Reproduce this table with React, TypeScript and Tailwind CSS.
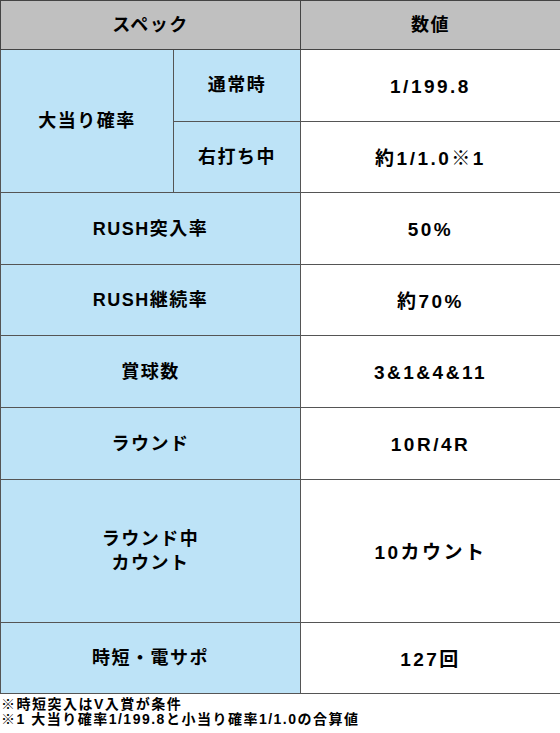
export default function App() {
  const label = "bg-[#bde3f7] border border-[#555] text-center align-middle tracking-[1.5px]";
  const value = "bg-white border border-[#555] text-center align-middle text-[19px] tracking-[2.5px] pt-[4px]";
  const rows: { name: React.ReactNode; val: string; h: string }[] = [
    { name: "RUSH突入率", val: "50%", h: "h-[72px]" },
    { name: "RUSH継続率", val: "約70%", h: "h-[71px]" },
    { name: "賞球数", val: "3&1&4&11", h: "h-[72px]" },
    { name: "ラウンド", val: "10R/4R", h: "h-[72px]" },
    {
      name: (
        <>
          ラウンド中
          <br />
          カウント
        </>
      ),
      val: "10カウント",
      h: "h-[143px]",
    },
    { name: "時短・電サポ", val: "127回", h: "h-[71px]" },
  ];

  return (
    <div className="w-[560px] h-[733px] bg-white font-['Liberation_Sans','Noto_Sans_CJK_JP',sans-serif] font-bold text-[18px] text-black">
      <table className="w-[560px] border-collapse table-fixed border border-[#222]">
        <colgroup>
          <col className="w-[173px]" />
          <col className="w-[127px]" />
          <col className="w-[260px]" />
        </colgroup>
        <tbody>
          <tr className="h-[49px]">
            <td colSpan={2} className="bg-[#c0c0c0] border border-[#444] text-center align-middle tracking-[1.5px]">
              スペック
            </td>
            <td className="bg-[#c0c0c0] border border-[#444] text-center align-middle tracking-[1.5px]">数値</td>
          </tr>
          <tr className="h-[72px]">
            <td rowSpan={2} className={label}>
              大当り確率
            </td>
            <td className={label}>通常時</td>
            <td className={value}>1/199.8</td>
          </tr>
          <tr className="h-[71px]">
            <td className={label}>右打ち中</td>
            <td className={value}>約1/1.0※1</td>
          </tr>
          {rows.map((r, i) => (
            <tr key={i} className={r.h}>
              <td colSpan={2} className={`${label} leading-[24px]`}>
                {r.name}
              </td>
              <td className={value}>{r.val}</td>
            </tr>
          ))}
        </tbody>
      </table>
      <div className="text-[14px] leading-[15px] pt-[3px] tracking-[1.5px] pl-[1px]">
        <p>※時短突入はV入賞が条件</p>
        <p>※1 大当り確率1/199.8と小当り確率1/1.0の合算値</p>
      </div>
    </div>
  );
}
